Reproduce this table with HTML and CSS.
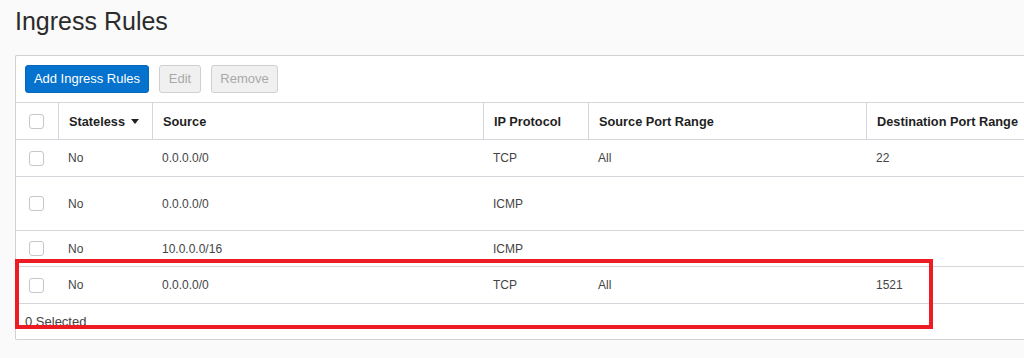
FILE: index.html
```html
<!DOCTYPE html>
<html lang="en">
<head>
<meta charset="utf-8">
<title>Ingress Rules</title>
<link rel="stylesheet" href="styles.css">
</head>
<body>
<h1 class="title">Ingress Rules</h1>
<div class="panel">
  <div class="toolbar">
    <button class="btn btn-primary">Add Ingress Rules</button>
    <button class="btn btn-disabled btn-edit">Edit</button>
    <button class="btn btn-disabled btn-remove">Remove</button>
  </div>
  <div class="table">
    <div class="row head">
      <div class="cell c-check"><span class="checkbox"></span></div>
      <div class="cell">Stateless <span class="caret"></span></div>
      <div class="cell">Source</div>
      <div class="cell">IP Protocol</div>
      <div class="cell">Source Port Range</div>
      <div class="cell">Destination Port Range</div>
    </div>
    <div class="row">
      <div class="cell c-check"><span class="checkbox"></span></div>
      <div class="cell">No</div>
      <div class="cell">0.0.0.0/0</div>
      <div class="cell">TCP</div>
      <div class="cell">All</div>
      <div class="cell">22</div>
    </div>
    <div class="row tall">
      <div class="cell c-check"><span class="checkbox"></span></div>
      <div class="cell">No</div>
      <div class="cell">0.0.0.0/0</div>
      <div class="cell">ICMP</div>
      <div class="cell"></div>
      <div class="cell"></div>
    </div>
    <div class="row short">
      <div class="cell c-check"><span class="checkbox"></span></div>
      <div class="cell">No</div>
      <div class="cell">10.0.0.0/16</div>
      <div class="cell">ICMP</div>
      <div class="cell"></div>
      <div class="cell"></div>
    </div>
    <div class="row">
      <div class="cell c-check"><span class="checkbox"></span></div>
      <div class="cell">No</div>
      <div class="cell">0.0.0.0/0</div>
      <div class="cell">TCP</div>
      <div class="cell">All</div>
      <div class="cell">1521</div>
    </div>
  </div>
  <div class="footer">0 Selected</div>
  <div class="highlight"></div>
</div>
</body>
</html>
```
FILE: styles.css
```css
html, body {
  margin: 0;
  padding: 0;
}
body {
  background: #fafafa;
  font-family: "Liberation Sans", Arial, sans-serif;
  color: #3a3a3a;
  overflow: hidden;
  width: 1024px;
  height: 358px;
}
.title {
  margin: 0;
  padding: 7px 0 0 15px;
  font-size: 25px;
  line-height: 29px;
  font-weight: normal;
  color: #2b2b2b;
  height: 55px;
  box-sizing: border-box;
}
.panel {
  position: relative;
  margin-left: 15px;
  width: 1009px;
  box-sizing: border-box;
  background: #ffffff;
  border: 1px solid #cfd2d5;
  border-right: none;
  border-radius: 2px 0 0 2px;
}
.toolbar {
  display: flex;
  gap: 10px;
  padding: 9px;
  height: 46px;
  box-sizing: border-box;
}
.btn {
  font-family: "Liberation Sans", Arial, sans-serif;
  font-size: 13px;
  height: 28px;
  border-radius: 3px;
  padding: 0;
  box-sizing: border-box;
  line-height: 26px;
  white-space: nowrap;
  text-align: center;
}
.btn-primary {
  background: #0572ce;
  border: 1px solid #0568bd;
  color: #ffffff;
  width: 124px;
}
.btn-disabled {
  background: #f0f0f0;
  border: 1px solid #cfcfcf;
  color: #a9a9a9;
}
.btn-edit { width: 42px; }
.btn-remove { width: 67px; }
.table {
  border-top: 1px solid #d4d7db;
}
.row {
  display: grid;
  grid-template-columns: 42px 94px 331px 105px 278px 1fr;
  height: 37px;
  border-bottom: 1px solid #d4d7db;
  box-sizing: border-box;
  font-size: 12px;
}
.row.tall { height: 54px; }
.row.short { height: 36px; }
.cell {
  display: flex;
  align-items: center;
  padding-left: 10px;
  box-sizing: border-box;
  color: #444444;
  white-space: nowrap;
}
.c-check { padding-left: 13px; }
.head .cell {
  font-weight: bold;
  font-size: 12.75px;
  color: #1f1f1f;
}
.head .cell + .cell {
  border-left: 1px solid #d4d7db;
}
.checkbox {
  display: block;
  width: 15px;
  height: 15px;
  box-sizing: border-box;
  border: 1px solid #c3c6ca;
  border-radius: 3px;
  background: #ffffff;
}
.caret {
  display: inline-block;
  width: 0;
  height: 0;
  margin-left: 6px;
  border-left: 4px solid transparent;
  border-right: 4px solid transparent;
  border-top: 5px solid #222222;
}
.footer {
  font-size: 13px;
  line-height: 15px;
  padding: 10px 9px 10px 9px;
  color: #444444;
}
.highlight {
  position: absolute;
  left: -1px;
  top: 203px;
  width: 918px;
  height: 70px;
  box-sizing: border-box;
  border: 4px solid #ed1c24;
}
```
